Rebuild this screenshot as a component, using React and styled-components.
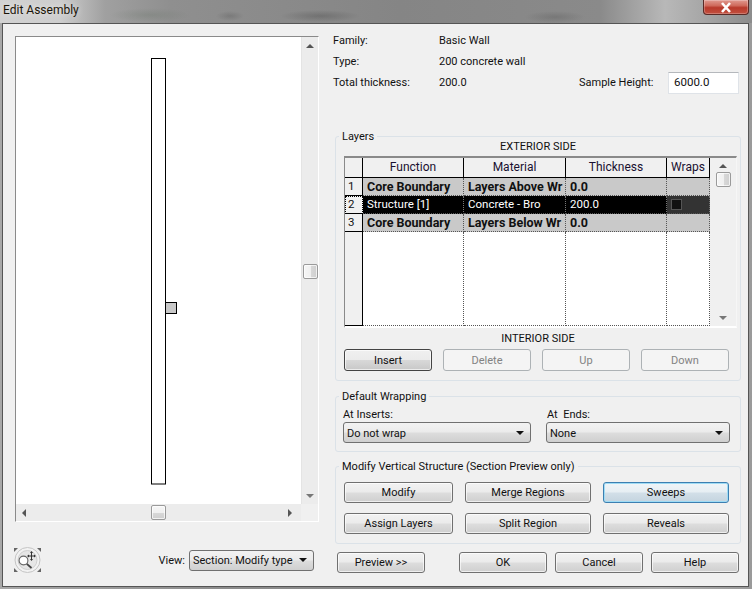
import React from "react";
import styled, { createGlobalStyle, css } from "styled-components";

const Global = createGlobalStyle`
  html, body { margin: 0; padding: 0; background: #8a8a8a; }
  * { box-sizing: border-box; }
  body { font-family: Roboto, "Noto Sans", "Liberation Sans", sans-serif; font-size: 11px; color: #111; }
`;

const Win = styled.div`
  width: 752px; height: 589px; display: flex; flex-direction: column; padding: 0 3px 2px 2px;
  background: linear-gradient(90deg, #a8a8a8, #8c8c8c 30%, #888 60%, #b0b0b0 88%, #9a9a9a);
`;
const TitleBar = styled.div`
  height: 23px; margin: 0 -3px 0 -2px; padding-left: 3px; display: flex; justify-content: space-between; flex: none;
  background:
    radial-gradient(ellipse 40px 7px at 150px 15px, rgba(110,120,110,.35), transparent),
    radial-gradient(ellipse 14px 5px at 230px 16px, rgba(80,80,80,.3), transparent),
    radial-gradient(ellipse 40px 6px at 320px 16px, rgba(70,70,70,.35), transparent),
    radial-gradient(ellipse 30px 6px at 555px 17px, rgba(80,80,80,.3), transparent),
    linear-gradient(90deg, #d2d2d2 0, #cdcdcd 60px, #a0a0a0 105px, #8f8f8f 170px, #858585 400px, #8a8a8a 600px, #b8b8b8 665px, #a8a8a8 700px, #8c8c8c 752px);
`;
const Title = styled.span`
  font-size: 12px; line-height: 20px; color: #1a1408;
  text-shadow: 0 0 6px rgba(255,255,255,.7);
`;
const CloseBtn = styled.div`
  width: 46px; height: 15px; margin-right: 3px; display: flex; align-items: center; justify-content: center;
  border: 1px solid #5a2a26; border-top: none; border-radius: 0 0 4px 4px;
  background: linear-gradient(#e09a90, #cf6a5c 40%, #b8392b 55%, #c2503f 100%);
  box-shadow: inset 0 0 0 1px rgba(255,255,255,.25);
`;
const Client = styled.div`
  flex: 1; display: grid; grid-template-columns: 304px 1fr; column-gap: 14px;
  border: 1px solid #555; background: #f0f0f0; padding: 6px 0 0 12px;
`;
const LeftCol = styled.div`display: flex; flex-direction: column; padding-top: 6px;`;
const Pane = styled.div`
  width: 304px; height: 486px; display: grid; grid-template-columns: 1fr 17px; grid-template-rows: 1fr 17px;
  border-top: 1px solid #8a8a8a; border-left: 1px solid #8a8a8a; border-right: 1px solid #fff; border-bottom: 1px solid #fff;
`;
const Canvas = styled.div`background: #fff; overflow: hidden;`;
const VBar = styled.div`
  background: #ececec; border-left: 1px solid #e4e4e4; display: flex; flex-direction: column; align-items: center; justify-content: space-between; padding: 7px 0 6px;
`;
const HBar = styled.div`
  background: #ececec; display: flex; align-items: center; justify-content: space-between; padding: 0 9px 0 6px;
`;
const Corner = styled.div`background: #f0f0f0;`;
const Thumb = styled.div`
  width: 15px; height: 15px; border: 1px solid #9a9a9a; border-radius: 2px; flex: none;
  background: ${p => p.$h ? "linear-gradient(#f6f6f6, #f0f0f0 50%, #d8d8d8 52%, #cfcfcf)" : "linear-gradient(90deg, #f6f6f6, #f0f0f0 50%, #d8d8d8 52%, #cfcfcf)"};
  box-shadow: inset 0 0 0 1px rgba(255,255,255,.7);
`;
const HThumb = styled(Thumb)`margin-left: 2px;`;
const Arrow = styled.i`
  width: 0; height: 0; display: block; flex: none; border-style: solid; border-color: transparent;
  ${p => p.$d === "up" && css`border-width: 0 4px 4px; border-bottom-color: #555;`}
  ${p => p.$d === "down" && css`border-width: 4px 4px 0; border-top-color: #777;`}
  ${p => p.$d === "left" && css`border-width: 4px 4px 4px 0; border-right-color: #555;`}
  ${p => p.$d === "right" && css`border-width: 4px 0 4px 4px; border-left-color: #555;`}
`;
const LeftFoot = styled.div`display: flex; align-items: center; margin: 25px 5px 0 -1px; height: 26px;`;
const ViewLabel = styled.span`margin-left: auto; margin-right: 4px;`;

const RightCol = styled.div`display: flex; flex-direction: column; padding-right: 8px;`;
const Info = styled.div`
  display: grid; grid-template-columns: 106px 140px 89px 71px; grid-auto-rows: 21px; align-items: center;
`;
const InfoText = styled.span`${p => p.$wide && css`grid-column: span 3;`}`;
const HeightInput = styled.div`
  height: 22px; background: #fff; border: 1px solid #dfe3e8; border-top-color: #b5b8bc; padding: 0 5px; line-height: 19px; font-size: 11.5px;
`;
const Group = styled.fieldset`
  margin: ${p => p.$top}px 0 0 2px; width: 406px; padding: ${p => p.$pad}; min-width: 0;
  border: 1px solid #dbe2e8; border-radius: 3px;
`;
const GroupTitle = styled.legend`
  height: 6px; line-height: 8px; padding: 0 3px; margin-left: ${p => p.$left}px; white-space: nowrap;
`;
const Side = styled.div`height: 14px; line-height: 14px; padding-top: 1px; text-align: center; margin-left: -8px;`;
const Frame = styled.div`
  margin: 3px 3px 3px 0; height: 172px; display: flex;
  border-top: 2px solid #8a8a8a; border-left: 1px solid #8a8a8a; border-bottom: 2px solid #fff; border-right: 1px solid #f6f6f6;
`;
const Sheet = styled.div`width: 365px; display: flex; flex-direction: column; background: #fff;`;
const COLS = "18px 101px 102px 101px 43px";
const HeadRow = styled.div`display: grid; grid-template-columns: ${COLS}; height: 20px; flex: none;`;
const HeadCell = styled.div`
  background: #f0f0f0; border-right: 1px solid #000; border-bottom: 1px solid #000; text-align: center; line-height: 18px; color: #1a1030; font-size: 12px;
`;
const Row = styled.div`display: grid; grid-template-columns: ${COLS}; height: 18px; flex: none;`;
const RowNo = styled.div`
  background: #f0f0f0; line-height: 17px; padding-left: 3px; font-size: 11.5px;
  border-right: 1px solid #000; border-bottom: 1px solid #000;
  ${p => p.$focus && css`outline: 1px dotted #000; outline-offset: -1px; border-right: none;`}
`;
const Cell = styled.div`
  overflow: hidden; white-space: nowrap; padding-left: 4px; line-height: 17px;
  border-right: 1px dotted ${p => p.$sel ? "#777" : "#555"}; border-bottom: 1px dotted #555;
  background: ${p => p.$sel ? "#000" : "#c9c9c9"}; color: ${p => p.$sel ? "#fff" : "#111"};
  font-weight: ${p => p.$sel ? 400 : 700}; font-size: ${p => p.$sel ? 11.5 : 12.5}px;
  ${p => p.$dim && css`background: #333;`}
  ${p => p.$center && css`display: flex; align-items: center; padding-left: 4px;`}
`;
const Check = styled.div`width: 11px; height: 11px; background: #111; border: 1px solid #555;`;
const EmptyRow = styled.div`display: grid; grid-template-columns: ${COLS}; flex: 1;`;
const EmptyHead = styled.div`background: #f0f0f0; border-right: 1px solid #000; border-bottom: 1px solid #000;`;
const EmptyCell = styled.div`background: #fff; border-right: 1px dotted #555; border-bottom: 1px dotted #555;`;
const TableBar = styled.div`
  flex: 1; background: #f0f0f0; display: flex; flex-direction: column; align-items: center; padding: 6px 0 6px;
`;
const TableThumb = styled(Thumb)`margin-top: 4px; margin-bottom: auto;`;
const ButtonRow = styled.div`display: flex; gap: 11px; margin-top: 4px;`;
const Btn = styled.div`
  height: 21px; width: ${p => p.$w || 88}px; flex: none; display: flex; align-items: center; justify-content: center;
  border: 1px solid #707070; border-radius: 3px; color: #111; padding-bottom: 1px;
  background: linear-gradient(#f2f2f2 0, #ebebeb 48%, #dddddd 52%, #cfcfcf 100%);
  box-shadow: inset 0 0 0 1px rgba(255,255,255,.65);
  ${p => p.$primary && css`border-color: #444; height: 22px; padding-bottom: 0; background: linear-gradient(#f0f0f0, #ebebeb 48%, #d8d8d8 52%, #c8c8c8);`}
  ${p => p.$off && css`border-color: #adb2b5; background: #f4f4f4; color: #838383; box-shadow: none; height: 22px; padding-bottom: 0;`}
  ${p => p.$hot && css`border-color: #3c7fb1; background: linear-gradient(#f0f5f8, #e6eef3 48%, #d2dfe8 52%, #c4d4df); box-shadow: inset 0 0 0 1px #9fdcf5;`}
`;
const WrapGrid = styled.div`display: grid; grid-template-columns: 188px 184px; column-gap: 15px;`;
const WrapCol = styled.div`display: flex; flex-direction: column;`;
const FieldLabel = styled.div`height: 15px; line-height: 16px; padding-left: ${p => p.$pad || 0}px;`;
const Drop = styled.div`
  height: 21px; width: ${p => p.$w}px; display: flex; align-items: center; justify-content: space-between; flex: none;
  padding: ${p => p.$low ? "1px" : "0"} 6px 0 3px; border: 1px solid #707070; border-radius: 3px; white-space: nowrap;
  background: linear-gradient(#f2f2f2 0, #ebebeb 48%, #dddddd 52%, #cfcfcf 100%);
`;
const DropArrow = styled.i`width: 0; height: 0; display: block; border-style: solid; border-color: transparent; border-width: 4px 4px 0; border-top-color: #111;`;
const ModGrid = styled.div`display: grid; grid-template-columns: 109px 126px 126px; gap: 10px 12px;`;
const FootRow = styled.div`display: flex; gap: 8px; margin: 8px 0 0 4px;`;
const PreviewBtn = styled(Btn)`margin-right: 26px;`;

const Wall = () => (
  <svg width="287" height="468" viewBox="0 0 287 468">
    <rect x="135.5" y="21.5" width="14" height="425.5" fill="#fff" stroke="#000" />
    <rect x="149.5" y="265.5" width="11" height="11" fill="#c8c8c8" stroke="#000" />
  </svg>
);

const CloseIcon = () => (
  <svg width="14" height="11" viewBox="0 0 14 11">
    <path d="M3 1 L11 10 M11 1 L3 10" stroke="#fff" strokeWidth="2.6" />
  </svg>
);

const WheelIcon = () => (
  <svg width="27" height="26" viewBox="0 0 27 26">
    <path d="M0 5 V1 H4 Z M27 5 V1 H23 Z M0 21 V25 H4 Z M27 21 V25 H23 Z" fill="#666" />
    <circle cx="13.5" cy="13" r="12.5" fill="#f2f2f2" stroke="#c4c4c4" />
    <circle cx="13.5" cy="13" r="9.5" fill="#e6e6e6" stroke="#cfcfcf" />
    <circle cx="9.5" cy="13.5" r="4.4" fill="#fff" stroke="#666" strokeWidth="1.1" />
    <path d="M12.8 16.8 L17.5 21" stroke="#444" strokeWidth="1.8" />
    <path d="M17.5 5.5 V12.5 M14.5 9 H20.5" stroke="#333" strokeWidth="1" />
    <path d="M17.5 4 L16 6 H19 Z M17.5 14 L16 12 H19 Z M13 9 L15 7.5 V10.5 Z M22 9 L20 7.5 V10.5 Z" fill="#333" />
  </svg>
);

export default function App() {
  return (
    <Win>
      <Global />
      <TitleBar>
        <Title>Edit Assembly</Title>
        <CloseBtn><CloseIcon /></CloseBtn>
      </TitleBar>
      <Client>
        <LeftCol>
          <Pane>
            <Canvas><Wall /></Canvas>
            <VBar>
              <Arrow $d="up" />
              <Thumb />
              <Arrow $d="down" />
            </VBar>
            <HBar>
              <Arrow $d="left" />
              <HThumb $h />
              <Arrow $d="right" />
            </HBar>
            <Corner />
          </Pane>
          <LeftFoot>
            <WheelIcon />
            <ViewLabel>View:</ViewLabel>
            <Drop $w={125}>
              <span>Section: Modify type</span>
              <DropArrow />
            </Drop>
          </LeftFoot>
        </LeftCol>
        <RightCol>
          <Info>
            <InfoText>Family:</InfoText><InfoText $wide>Basic Wall</InfoText>
            <InfoText>Type:</InfoText><InfoText $wide>200 concrete wall</InfoText>
            <InfoText>Total thickness:</InfoText><InfoText>200.0</InfoText><InfoText>Sample Height:</InfoText>
            <HeightInput>6000.0</HeightInput>
          </Info>
          <Group $top={40} $pad="0 0 9px 8px">
            <GroupTitle $left={-5}>Layers</GroupTitle>
            <Side>EXTERIOR SIDE</Side>
            <Frame>
              <Sheet>
                <HeadRow>
                  <HeadCell />
                  <HeadCell>Function</HeadCell>
                  <HeadCell>Material</HeadCell>
                  <HeadCell>Thickness</HeadCell>
                  <HeadCell>Wraps</HeadCell>
                </HeadRow>
                <Row>
                  <RowNo>1</RowNo>
                  <Cell>Core Boundary</Cell>
                  <Cell>Layers Above Wr</Cell>
                  <Cell>0.0</Cell>
                  <Cell />
                </Row>
                <Row>
                  <RowNo $focus>2</RowNo>
                  <Cell $sel>Structure [1]</Cell>
                  <Cell $sel>Concrete - Bro</Cell>
                  <Cell $sel>200.0</Cell>
                  <Cell $sel $dim $center><Check /></Cell>
                </Row>
                <Row>
                  <RowNo>3</RowNo>
                  <Cell>Core Boundary</Cell>
                  <Cell>Layers Below Wr</Cell>
                  <Cell>0.0</Cell>
                  <Cell />
                </Row>
                <EmptyRow>
                  <EmptyHead />
                  <EmptyCell />
                  <EmptyCell />
                  <EmptyCell />
                  <EmptyCell />
                </EmptyRow>
              </Sheet>
              <TableBar>
                <Arrow $d="up" />
                <TableThumb />
                <Arrow $d="down" />
              </TableBar>
            </Frame>
            <Side>INTERIOR SIDE</Side>
            <ButtonRow>
              <Btn $primary>Insert</Btn>
              <Btn $off>Delete</Btn>
              <Btn $off>Up</Btn>
              <Btn $off>Down</Btn>
            </ButtonRow>
          </Group>
          <Group $top={12} $pad="8px 0 8px 7px">
            <GroupTitle $left={-4}>Default Wrapping</GroupTitle>
            <WrapGrid>
              <WrapCol>
                <FieldLabel>At Inserts:</FieldLabel>
                <Drop $w={188} $low><span>Do not wrap</span><DropArrow /></Drop>
              </WrapCol>
              <WrapCol>
                <FieldLabel $pad={1}>At&nbsp; Ends:</FieldLabel>
                <Drop $w={184} $low><span>None</span><DropArrow /></Drop>
              </WrapCol>
            </WrapGrid>
          </Group>
          <Group $top={11} $pad="13px 0 9px 8px">
            <GroupTitle $left={-5}>Modify Vertical Structure (Section Preview only)</GroupTitle>
            <ModGrid>
              <Btn $w={109}>Modify</Btn>
              <Btn $w={126}>Merge Regions</Btn>
              <Btn $w={126} $hot>Sweeps</Btn>
              <Btn $w={109}>Assign Layers</Btn>
              <Btn $w={126}>Split Region</Btn>
              <Btn $w={126}>Reveals</Btn>
            </ModGrid>
          </Group>
          <FootRow>
            <PreviewBtn>Preview &gt;&gt;</PreviewBtn>
            <Btn>OK</Btn>
            <Btn>Cancel</Btn>
            <Btn>Help</Btn>
          </FootRow>
        </RightCol>
      </Client>
    </Win>
  );
}
